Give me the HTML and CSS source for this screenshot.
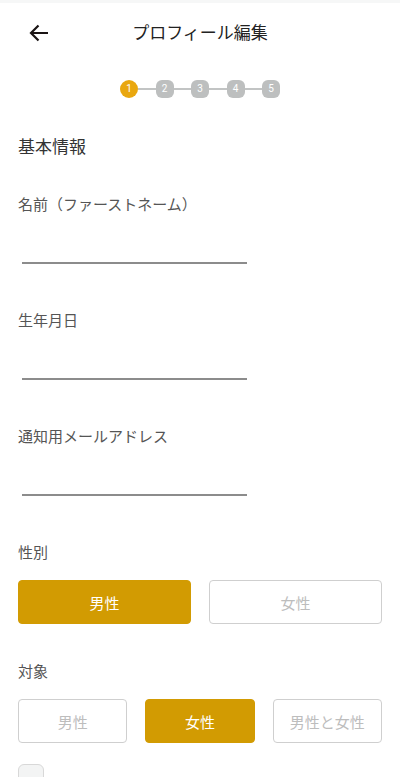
FILE: index.html
```html
<!DOCTYPE html>
<html>
<head>
<meta charset="utf-8">
<meta name="viewport" content="width=device-width, initial-scale=1.0">
<title>プロフィール編集</title>
<link rel="stylesheet" href="styles.css">
</head>
<body>
<div class="topbar"></div>
<div id="header">
    <span class="back">
        <svg width="20" height="18" viewBox="0 0 20 18"><path d="M19 9H2M9.5 1.5L2 9l7.5 7.5" fill="none" stroke="#1a1414" stroke-width="2.2"/></svg>
    </span>
    <h1>プロフィール編集</h1>
</div>

<div class="steps">
    <span class="step active">1</span><span class="bar"></span>
    <span class="step">2</span><span class="bar"></span>
    <span class="step">3</span><span class="bar"></span>
    <span class="step">4</span><span class="bar"></span>
    <span class="step">5</span>
</div>

<div class="content">
    <h2>基本情報</h2>

    <div class="field">
        <div class="label">名前（ファーストネーム）</div>
        <input class="line" type="text">
    </div>
    <div class="field">
        <div class="label">生年月日</div>
        <input class="line" type="text">
    </div>
    <div class="field">
        <div class="label">通知用メールアドレス</div>
        <input class="line" type="text">
    </div>

    <div class="group">
        <div class="label">性別</div>
        <div class="choices two">
            <div class="choice on">男性</div>
            <div class="choice">女性</div>
        </div>
    </div>

    <div class="group">
        <div class="label">対象</div>
        <div class="choices three">
            <div class="choice">男性</div>
            <div class="choice on">女性</div>
            <div class="choice">男性と女性</div>
        </div>
    </div>

    <div class="check">
        <span class="box"></span>
        <span class="check-text">プロフィールを公開する</span>
    </div>
</div>
</body>
</html>
```
FILE: styles.css
```css
* {
	box-sizing: border-box;
}

body {
	margin: 0;
	background: #fff;
	font-family: "Noto Sans CJK JP", "Noto Sans", sans-serif;
	color: #333;
	overflow: hidden;
	height: 777px;
}

.topbar {
	height: 3px;
	background: #f6f7f7;
}

#header {
	height: 59px;
	display: flex;
	align-items: center;
	justify-content: center;
	position: relative;
}

#header .back {
	position: absolute;
	left: 29px;
	top: 20px;
	width: 20px;
	height: 18px;
}

#header h1 {
	margin: 0;
	font-size: 17px;
	font-weight: normal;
	color: #222;
	margin-top: -3px;
}

.steps {
	display: flex;
	justify-content: center;
	align-items: center;
	margin-top: 18px;
	height: 18px;
}

.step {
	width: 18px;
	height: 18px;
	border-radius: 6px;
	background: #bdbfbf;
	color: #fff;
	font-family: Roboto, sans-serif;
	font-size: 10px;
	line-height: 18px;
	text-align: center;
}

.step.active {
	background: #e9a70f;
	border-radius: 50%;
}

.steps .bar {
	width: 17.5px;
	height: 2px;
	background: #c2c4c4;
}

.content {
	padding: 0 18px;
}

h2 {
	margin: 36px 0 0;
	font-size: 17px;
	font-weight: normal;
	line-height: 24px;
	color: #333;
}

.label {
	font-size: 15px;
	line-height: 22px;
	color: #555;
}

.field {
	margin-top: 35px;
}

.field + .field {
	margin-top: 45px;
}

.line {
	display: block;
	width: 225px;
	height: 40px;
	margin: 9px 0 0 4px;
	border: 0;
	border-bottom: 2px solid #8c8c8c;
	outline: none;
	background: transparent;
}

.group {
	margin-top: 45px;
}

.group + .group {
	margin-top: 36px;
}

.choices {
	display: grid;
	gap: 18px;
	margin-top: 17px;
}

.choices.two {
	grid-template-columns: 1fr 1fr;
}

.choices.three {
	grid-template-columns: 1fr 1fr 1fr;
}

.choice {
	height: 44px;
	border: 1px solid #cfcfcf;
	border-radius: 4px;
	color: #bdbdbd;
	font-size: 15px;
	display: flex;
	align-items: center;
	justify-content: center;
}

.choice.on {
	background: #d29b02;
	border-color: #d29b02;
	color: #fff;
}

.check {
	display: flex;
	align-items: flex-start;
	margin-top: 21px;
	gap: 14px;
}

.check .box {
	width: 26px;
	height: 26px;
	border: 1px solid #d8d8d8;
	border-radius: 6px;
	background: #f3f4f4;
}

.check-text {
	font-size: 15px;
	color: #777;
	margin-top: 14px;
}
```
